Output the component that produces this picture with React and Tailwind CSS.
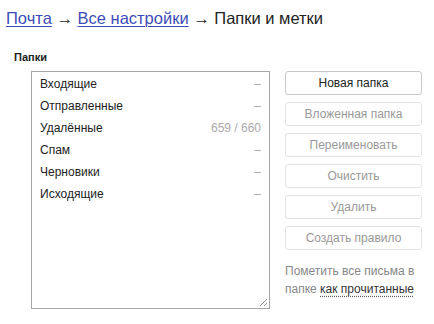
const folders = [
  { name: "Входящие", count: "–" },
  { name: "Отправленные", count: "–" },
  { name: "Удалённые", count: "659 / 660" },
  { name: "Спам", count: "–" },
  { name: "Черновики", count: "–" },
  { name: "Исходящие", count: "–" },
];

const actions = ["Вложенная папка", "Переименовать", "Очистить", "Удалить", "Создать правило"];

export default function App() {
  return (
    <div className="h-[324px] w-[434px] bg-white font-['Liberation_Sans',Arial,sans-serif] text-[#222]">
      <div className="pl-[6px] pt-[7px] text-[16.5px] leading-[22px]">
        <a href="#" className="text-[#3d4db7] underline decoration-1 underline-offset-2">Почта</a>
        <span> → </span>
        <a href="#" className="text-[#3d4db7] underline decoration-1 underline-offset-2">Все настройки</a>
        <span> → Папки и метки</span>
      </div>

      <div className="pl-[14px] pt-[21px] text-[11px] font-bold leading-[14px]">Папки</div>

      <div className="mt-[7px] flex pl-[31px]">
        <div className="relative h-[238px] w-[239px] border border-[#a6a6a6] pt-[1px]">
          {folders.map((f) => (
            <div key={f.name} className="flex h-[22px] items-center justify-between pl-[8px] pr-[8px] text-[12px]">
              <span>{f.name}</span>
              <span className="text-[#aaa]">{f.count}</span>
            </div>
          ))}
          <svg className="absolute bottom-[1px] right-[1px]" width="10" height="10" viewBox="0 0 10 10">
            <path d="M9 2 L2 9 M9 6 L6 9" stroke="#999" strokeWidth="1" />
          </svg>
        </div>

        <div className="ml-[15px] flex w-[137px] flex-col gap-[7px]">
          <button className="h-[24px] rounded-[3px] border border-[#c8c8c8] bg-white text-[12px] text-[#222]">
            Новая папка
          </button>
          {actions.map((a) => (
            <button key={a} className="h-[24px] rounded-[3px] border border-[#e3e3e3] bg-white text-[12px] text-[#999]">
              {a}
            </button>
          ))}
          <p className="mt-[5px] text-[12px] leading-[18px] text-[#888]">
            Пометить все письма в папке{" "}
            <span className="text-[#333] underline decoration-[#555] decoration-dotted underline-offset-[3px]">как прочитанные</span>
          </p>
        </div>
      </div>
    </div>
  );
}
